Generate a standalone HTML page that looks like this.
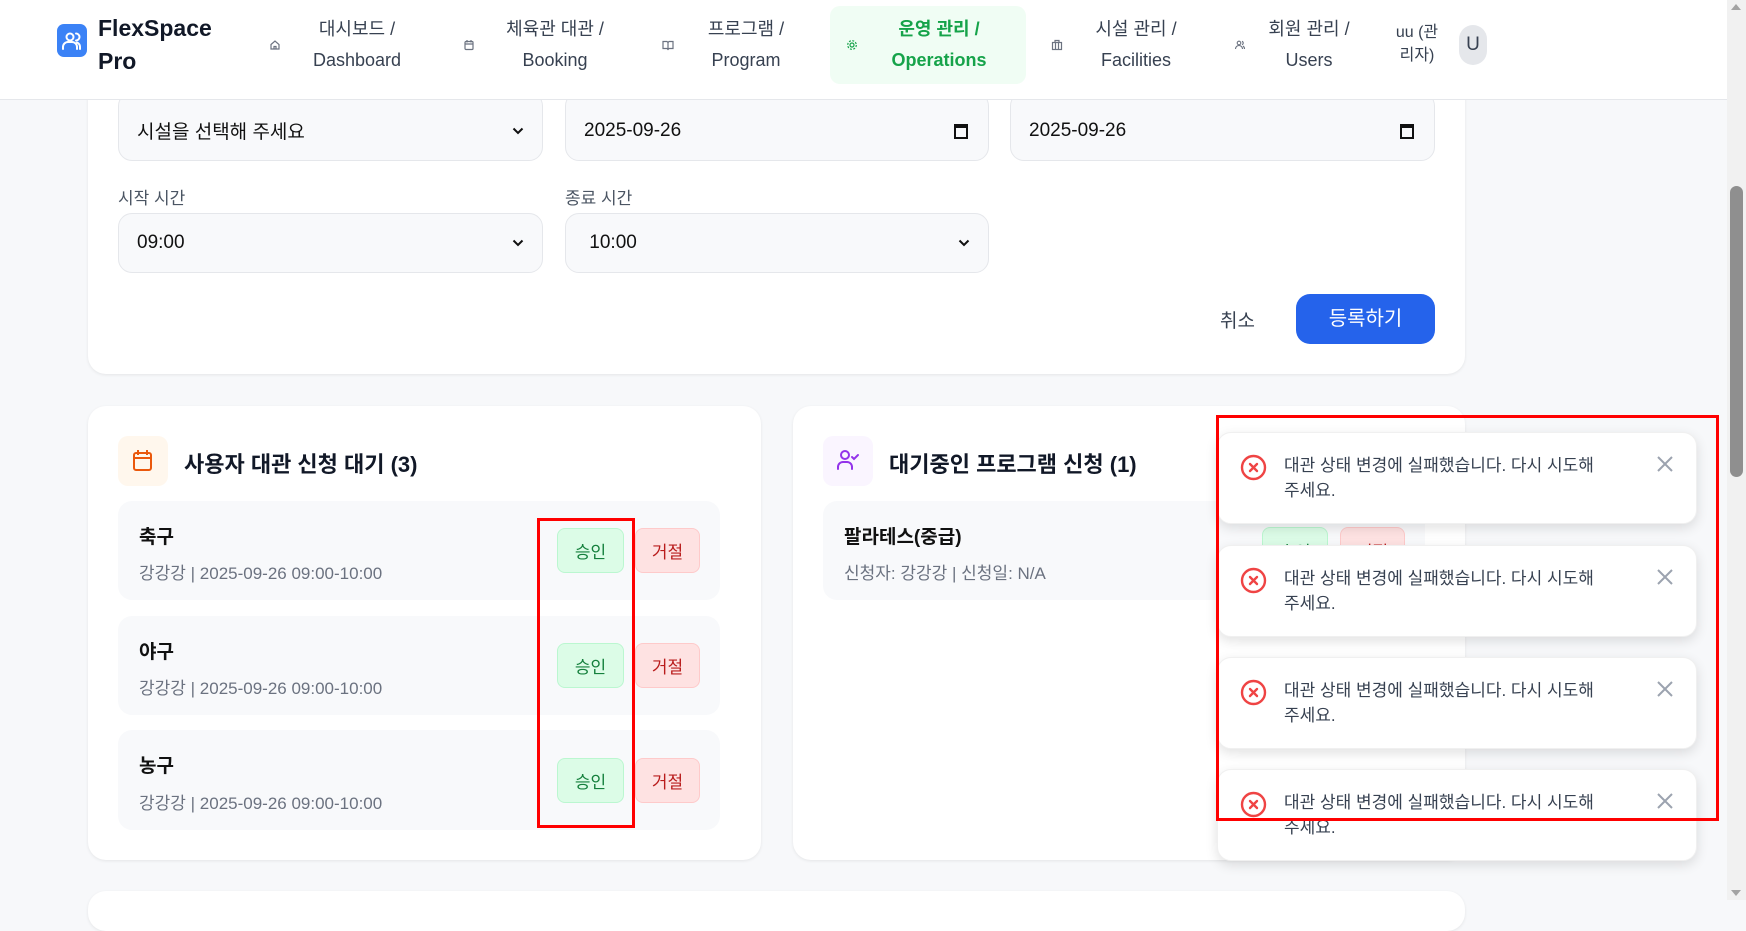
<!DOCTYPE html>
<html><head><meta charset="utf-8"><style>
*{box-sizing:border-box;margin:0;padding:0}
body{width:1746px;height:900px;overflow:hidden;background:#f7f8fa;font-family:"Liberation Sans","Noto Sans CJK KR",sans-serif;position:relative;color:#111827}
.a{position:absolute}
.hdr{left:0;top:0;width:1727px;height:100px;background:#fff;border-bottom:1px solid #e5e7eb}
.nav{text-align:center;font-size:18px;line-height:31px;color:#374151;white-space:nowrap}
.card{background:#fff;border-radius:18px;box-shadow:0 1px 3px rgba(0,0,0,.08)}
.inp{background:#f8f9fb;border:1px solid #e5e7eb;border-radius:14px;font-size:19px;color:#111;padding-left:18px;display:flex;align-items:center}
.lbl{font-size:17px;color:#4b5563}
.item{background:#f8f9fb;border-radius:14px}
.it{font-size:19px;font-weight:bold;color:#111}
.is{font-size:17px;color:#6b7280}
.ok{background:#dcfce7;border:1px solid #bbf7d0;color:#15803d;border-radius:8px;font-size:17px;display:flex;align-items:center;justify-content:center}
.no{background:#fee2e2;border:1px solid #fecaca;color:#b91c1c;border-radius:8px;font-size:17px;display:flex;align-items:center;justify-content:center}
.toast{left:1217px;width:480px;height:92px;background:#fff;border-radius:14px;box-shadow:0 4px 12px rgba(0,0,0,.12);border:1px solid #f0f0f0}
.toast .tx{position:absolute;left:66px;top:20px;font-size:17px;line-height:25px;color:#374151;width:360px}
.toast svg.ic{position:absolute;left:22px;top:21px}
.toast svg.cl{position:absolute;left:438px;top:22px}
</style></head><body>

<div class="a card" style="left:88px;top:60px;width:1377px;height:314px"></div>
<div class="a inp" style="left:118px;top:92px;width:425px;height:69px;padding-top:8px;justify-content:space-between;padding-right:18px">시설을 선택해 주세요<svg width="12" height="8" viewBox="0 0 12 8"><path d="M1.5 1.5l4.5 4.5 4.5-4.5" fill="none" stroke="#111" stroke-width="2"/></svg></div>
<div class="a inp" style="left:565px;top:92px;width:424px;height:69px;padding-top:8px;justify-content:space-between;padding-right:20px">2025-09-26<svg width="14" height="16" viewBox="0 0 14 16"><rect x="1" y="2" width="12" height="13" fill="none" stroke="#111" stroke-width="2"/><rect x="1" y="2" width="12" height="3" fill="#111"/></svg></div>
<div class="a inp" style="left:1010px;top:92px;width:425px;height:69px;padding-top:8px;justify-content:space-between;padding-right:20px">2025-09-26<svg width="14" height="16" viewBox="0 0 14 16"><rect x="1" y="2" width="12" height="13" fill="none" stroke="#111" stroke-width="2"/><rect x="1" y="2" width="12" height="3" fill="#111"/></svg></div>

<div class="a hdr"></div>
<div class="a" style="left:57px;top:24px;width:30px;height:33px;background:#3b82f6;border-radius:7px">
<svg width="30" height="33" viewBox="0 0 30 33"><g fill="none" stroke="#fff" stroke-width="2" stroke-linecap="round"><circle cx="13" cy="13" r="3.5"/><path d="M6 25v-2a5 5 0 0 1 5-5h4a5 5 0 0 1 5 5v2"/><path d="M19 9.5a3.5 3.5 0 0 1 0 7"/><path d="M23 25v-2a5 5 0 0 0-3-4.5"/></g></svg></div>
<div class="a" style="left:98px;top:12px;font-size:23px;font-weight:bold;line-height:33px">FlexSpace<br>Pro</div>

<svg class="a" style="left:269px;top:39px" width="12" height="12" viewBox="0 0 12 12" fill="none" stroke="#6b7280" stroke-width="1.2"><path d="M2 5.5L6 2l4 3.5V10H2z"/><path d="M5 10V7.5h2V10"/></svg>
<div class="a nav" style="left:297px;top:14px;width:120px">대시보드 /<br>Dashboard</div>
<svg class="a" style="left:463px;top:39px" width="12" height="12" viewBox="0 0 12 12" fill="none" stroke="#6b7280" stroke-width="1.2"><rect x="2" y="2.5" width="8" height="8" rx="1"/><path d="M4 1v2.5M8 1v2.5M2 5h8"/></svg>
<div class="a nav" style="left:485px;top:14px;width:140px">체육관 대관 /<br>Booking</div>
<svg class="a" style="left:662px;top:39px" width="12" height="12" viewBox="0 0 12 12" fill="none" stroke="#6b7280" stroke-width="1.2"><path d="M1 2.5h4l1 1 1-1h4v7H7l-1 1-1-1H1z"/><path d="M6 3.5v6"/></svg>
<div class="a nav" style="left:686px;top:14px;width:120px">프로그램 /<br>Program</div>
<div class="a" style="left:830px;top:6px;width:196px;height:78px;background:#f0fdf4;border-radius:10px"></div>
<svg class="a" style="left:846px;top:39px" width="12" height="12" viewBox="0 0 12 12" fill="none" stroke="#16a34a" stroke-width="1.2"><circle cx="6" cy="6" r="2"/><circle cx="6" cy="6" r="4.3" stroke-dasharray="2 1.4"/></svg>
<div class="a nav" style="left:869px;top:14px;width:140px;color:#16a34a;font-weight:bold">운영 관리 /<br>Operations</div>
<svg class="a" style="left:1051px;top:39px" width="12" height="12" viewBox="0 0 12 12" fill="none" stroke="#6b7280" stroke-width="1.2"><rect x="1.5" y="3.5" width="9" height="7"/><path d="M4 3.5V1.5h4v2M4.5 3.5v7M7.5 3.5v7"/></svg>
<div class="a nav" style="left:1076px;top:14px;width:120px">시설 관리 /<br>Facilities</div>
<svg class="a" style="left:1234px;top:39px" width="12" height="12" viewBox="0 0 12 12" fill="none" stroke="#6b7280" stroke-width="1.1"><circle cx="5" cy="4" r="1.8"/><path d="M1.5 10a3.5 3.5 0 0 1 7 0M8 2.3a1.8 1.8 0 0 1 0 3.4M10.5 10a3.5 3.5 0 0 0-1.5-3"/></svg>
<div class="a nav" style="left:1249px;top:14px;width:120px">회원 관리 /<br>Users</div>
<div class="a" style="left:1387px;top:21px;width:60px;text-align:center;font-size:16px;line-height:23px;color:#374151">uu (관<br>리자)</div>
<div class="a" style="left:1459px;top:25px;width:28px;height:40px;border-radius:14px;background:#e5e7eb;font-size:19px;color:#374151;text-align:center;line-height:40px">U</div>

<div class="a lbl" style="left:118px;top:184px">시작 시간</div>
<div class="a lbl" style="left:565px;top:184px">종료 시간</div>
<div class="a inp" style="left:118px;top:213px;width:425px;height:60px;justify-content:space-between;padding-right:18px">09:00<svg width="12" height="8" viewBox="0 0 12 8"><path d="M1.5 1.5l4.5 4.5 4.5-4.5" fill="none" stroke="#111" stroke-width="2"/></svg></div>
<div class="a inp" style="left:565px;top:213px;width:424px;height:60px;justify-content:space-between;padding-right:18px">&nbsp;10:00<svg width="12" height="8" viewBox="0 0 12 8"><path d="M1.5 1.5l4.5 4.5 4.5-4.5" fill="none" stroke="#111" stroke-width="2"/></svg></div>
<div class="a" style="left:1220px;top:306px;font-size:19px;color:#374151">취소</div>
<div class="a" style="left:1296px;top:294px;width:139px;height:50px;background:#2563eb;border-radius:14px;color:#fff;font-size:20px;text-align:center;line-height:50px">등록하기</div>

<div class="a card" style="left:88px;top:406px;width:673px;height:454px"></div>
<div class="a" style="left:118px;top:436px;width:50px;height:50px;background:#fff7ed;border-radius:10px">
<svg width="50" height="50" viewBox="0 0 50 50" fill="none" stroke="#ea580c" stroke-width="2"><rect x="16" y="17" width="17" height="17" rx="2"/><path d="M20 14v5M29 14v5M16 22h17"/></svg></div>
<div class="a" style="left:184px;top:447px;font-size:22px;font-weight:bold">사용자 대관 신청 대기 (3)</div>

<div class="a item" style="left:118px;top:501px;width:602px;height:99px"></div>
<div class="a it" style="left:139px;top:522px">축구</div>
<div class="a is" style="left:139px;top:559px">강강강 | 2025-09-26 09:00-10:00</div>
<div class="a ok" style="left:557px;top:528px;width:67px;height:45px">승인</div>
<div class="a no" style="left:635px;top:528px;width:65px;height:45px">거절</div>

<div class="a item" style="left:118px;top:616px;width:602px;height:99px"></div>
<div class="a it" style="left:139px;top:637px">야구</div>
<div class="a is" style="left:139px;top:674px">강강강 | 2025-09-26 09:00-10:00</div>
<div class="a ok" style="left:557px;top:643px;width:67px;height:45px">승인</div>
<div class="a no" style="left:635px;top:643px;width:65px;height:45px">거절</div>

<div class="a item" style="left:118px;top:730px;width:602px;height:100px"></div>
<div class="a it" style="left:139px;top:751px">농구</div>
<div class="a is" style="left:139px;top:789px">강강강 | 2025-09-26 09:00-10:00</div>
<div class="a ok" style="left:557px;top:758px;width:67px;height:45px">승인</div>
<div class="a no" style="left:635px;top:758px;width:65px;height:45px">거절</div>
<div class="a" style="left:537px;top:518px;width:98px;height:310px;border:3px solid #f00"></div>

<div class="a card" style="left:793px;top:406px;width:672px;height:454px"></div>
<div class="a" style="left:823px;top:436px;width:50px;height:50px;background:#faf5ff;border-radius:10px">
<svg width="50" height="50" viewBox="0 0 50 50" fill="none" stroke="#9333ea" stroke-width="2" stroke-linecap="round"><circle cx="22" cy="19" r="4"/><path d="M15 33v-2a5 5 0 0 1 5-5h4a5 5 0 0 1 5 5v2M29 21l2 2 4-4"/></svg></div>
<div class="a" style="left:889px;top:447px;font-size:22px;font-weight:bold">대기중인 프로그램 신청 (1)</div>
<div class="a item" style="left:823px;top:501px;width:602px;height:99px"></div>
<div class="a it" style="left:844px;top:522px">팔라테스(중급)</div>
<div class="a is" style="left:844px;top:559px">신청자: 강강강 | 신청일: N/A</div>
<div class="a ok" style="left:1262px;top:527px;width:66px;height:46px">승인</div>
<div class="a no" style="left:1340px;top:527px;width:65px;height:46px">거절</div>

<div class="a card" style="left:88px;top:891px;width:1377px;height:40px"></div>

<div class="a toast" style="top:432px"><svg class="ic" width="27" height="27" viewBox="0 0 27 27" fill="none" stroke="#ef4444" stroke-width="2.4" stroke-linecap="round"><circle cx="13.5" cy="13.5" r="11.5"/><path d="M10 10l7 7M17 10l-7 7"/></svg><div class="tx">대관 상태 변경에 실패했습니다. 다시 시도해<br>주세요.</div><svg class="cl" width="18" height="18" viewBox="0 0 18 18" stroke="#9ca3af" stroke-width="2"><path d="M2 2l14 14M16 2L2 16"/></svg></div>
<div class="a toast" style="top:545px"><svg class="ic" width="27" height="27" viewBox="0 0 27 27" fill="none" stroke="#ef4444" stroke-width="2.4" stroke-linecap="round"><circle cx="13.5" cy="13.5" r="11.5"/><path d="M10 10l7 7M17 10l-7 7"/></svg><div class="tx">대관 상태 변경에 실패했습니다. 다시 시도해<br>주세요.</div><svg class="cl" width="18" height="18" viewBox="0 0 18 18" stroke="#9ca3af" stroke-width="2"><path d="M2 2l14 14M16 2L2 16"/></svg></div>
<div class="a toast" style="top:657px"><svg class="ic" width="27" height="27" viewBox="0 0 27 27" fill="none" stroke="#ef4444" stroke-width="2.4" stroke-linecap="round"><circle cx="13.5" cy="13.5" r="11.5"/><path d="M10 10l7 7M17 10l-7 7"/></svg><div class="tx">대관 상태 변경에 실패했습니다. 다시 시도해<br>주세요.</div><svg class="cl" width="18" height="18" viewBox="0 0 18 18" stroke="#9ca3af" stroke-width="2"><path d="M2 2l14 14M16 2L2 16"/></svg></div>
<div class="a toast" style="top:769px"><svg class="ic" width="27" height="27" viewBox="0 0 27 27" fill="none" stroke="#ef4444" stroke-width="2.4" stroke-linecap="round"><circle cx="13.5" cy="13.5" r="11.5"/><path d="M10 10l7 7M17 10l-7 7"/></svg><div class="tx">대관 상태 변경에 실패했습니다. 다시 시도해<br>주세요.</div><svg class="cl" width="18" height="18" viewBox="0 0 18 18" stroke="#9ca3af" stroke-width="2"><path d="M2 2l14 14M16 2L2 16"/></svg></div>
<div class="a" style="left:1216px;top:415px;width:503px;height:406px;border:3px solid #f00"></div>

<div class="a" style="left:1727px;top:0;width:19px;height:900px;background:#f1f1f1"></div>
<div class="a" style="left:1731px;top:4px;width:0;height:0;border-left:5px solid transparent;border-right:5px solid transparent;border-bottom:6px solid #a3a3a3"></div>
<div class="a" style="left:1730px;top:186px;width:13px;height:291px;background:#8f8f8f;border-radius:7px"></div>
<div class="a" style="left:1731px;top:890px;width:0;height:0;border-left:5px solid transparent;border-right:5px solid transparent;border-top:6px solid #a3a3a3"></div>
</body></html>
